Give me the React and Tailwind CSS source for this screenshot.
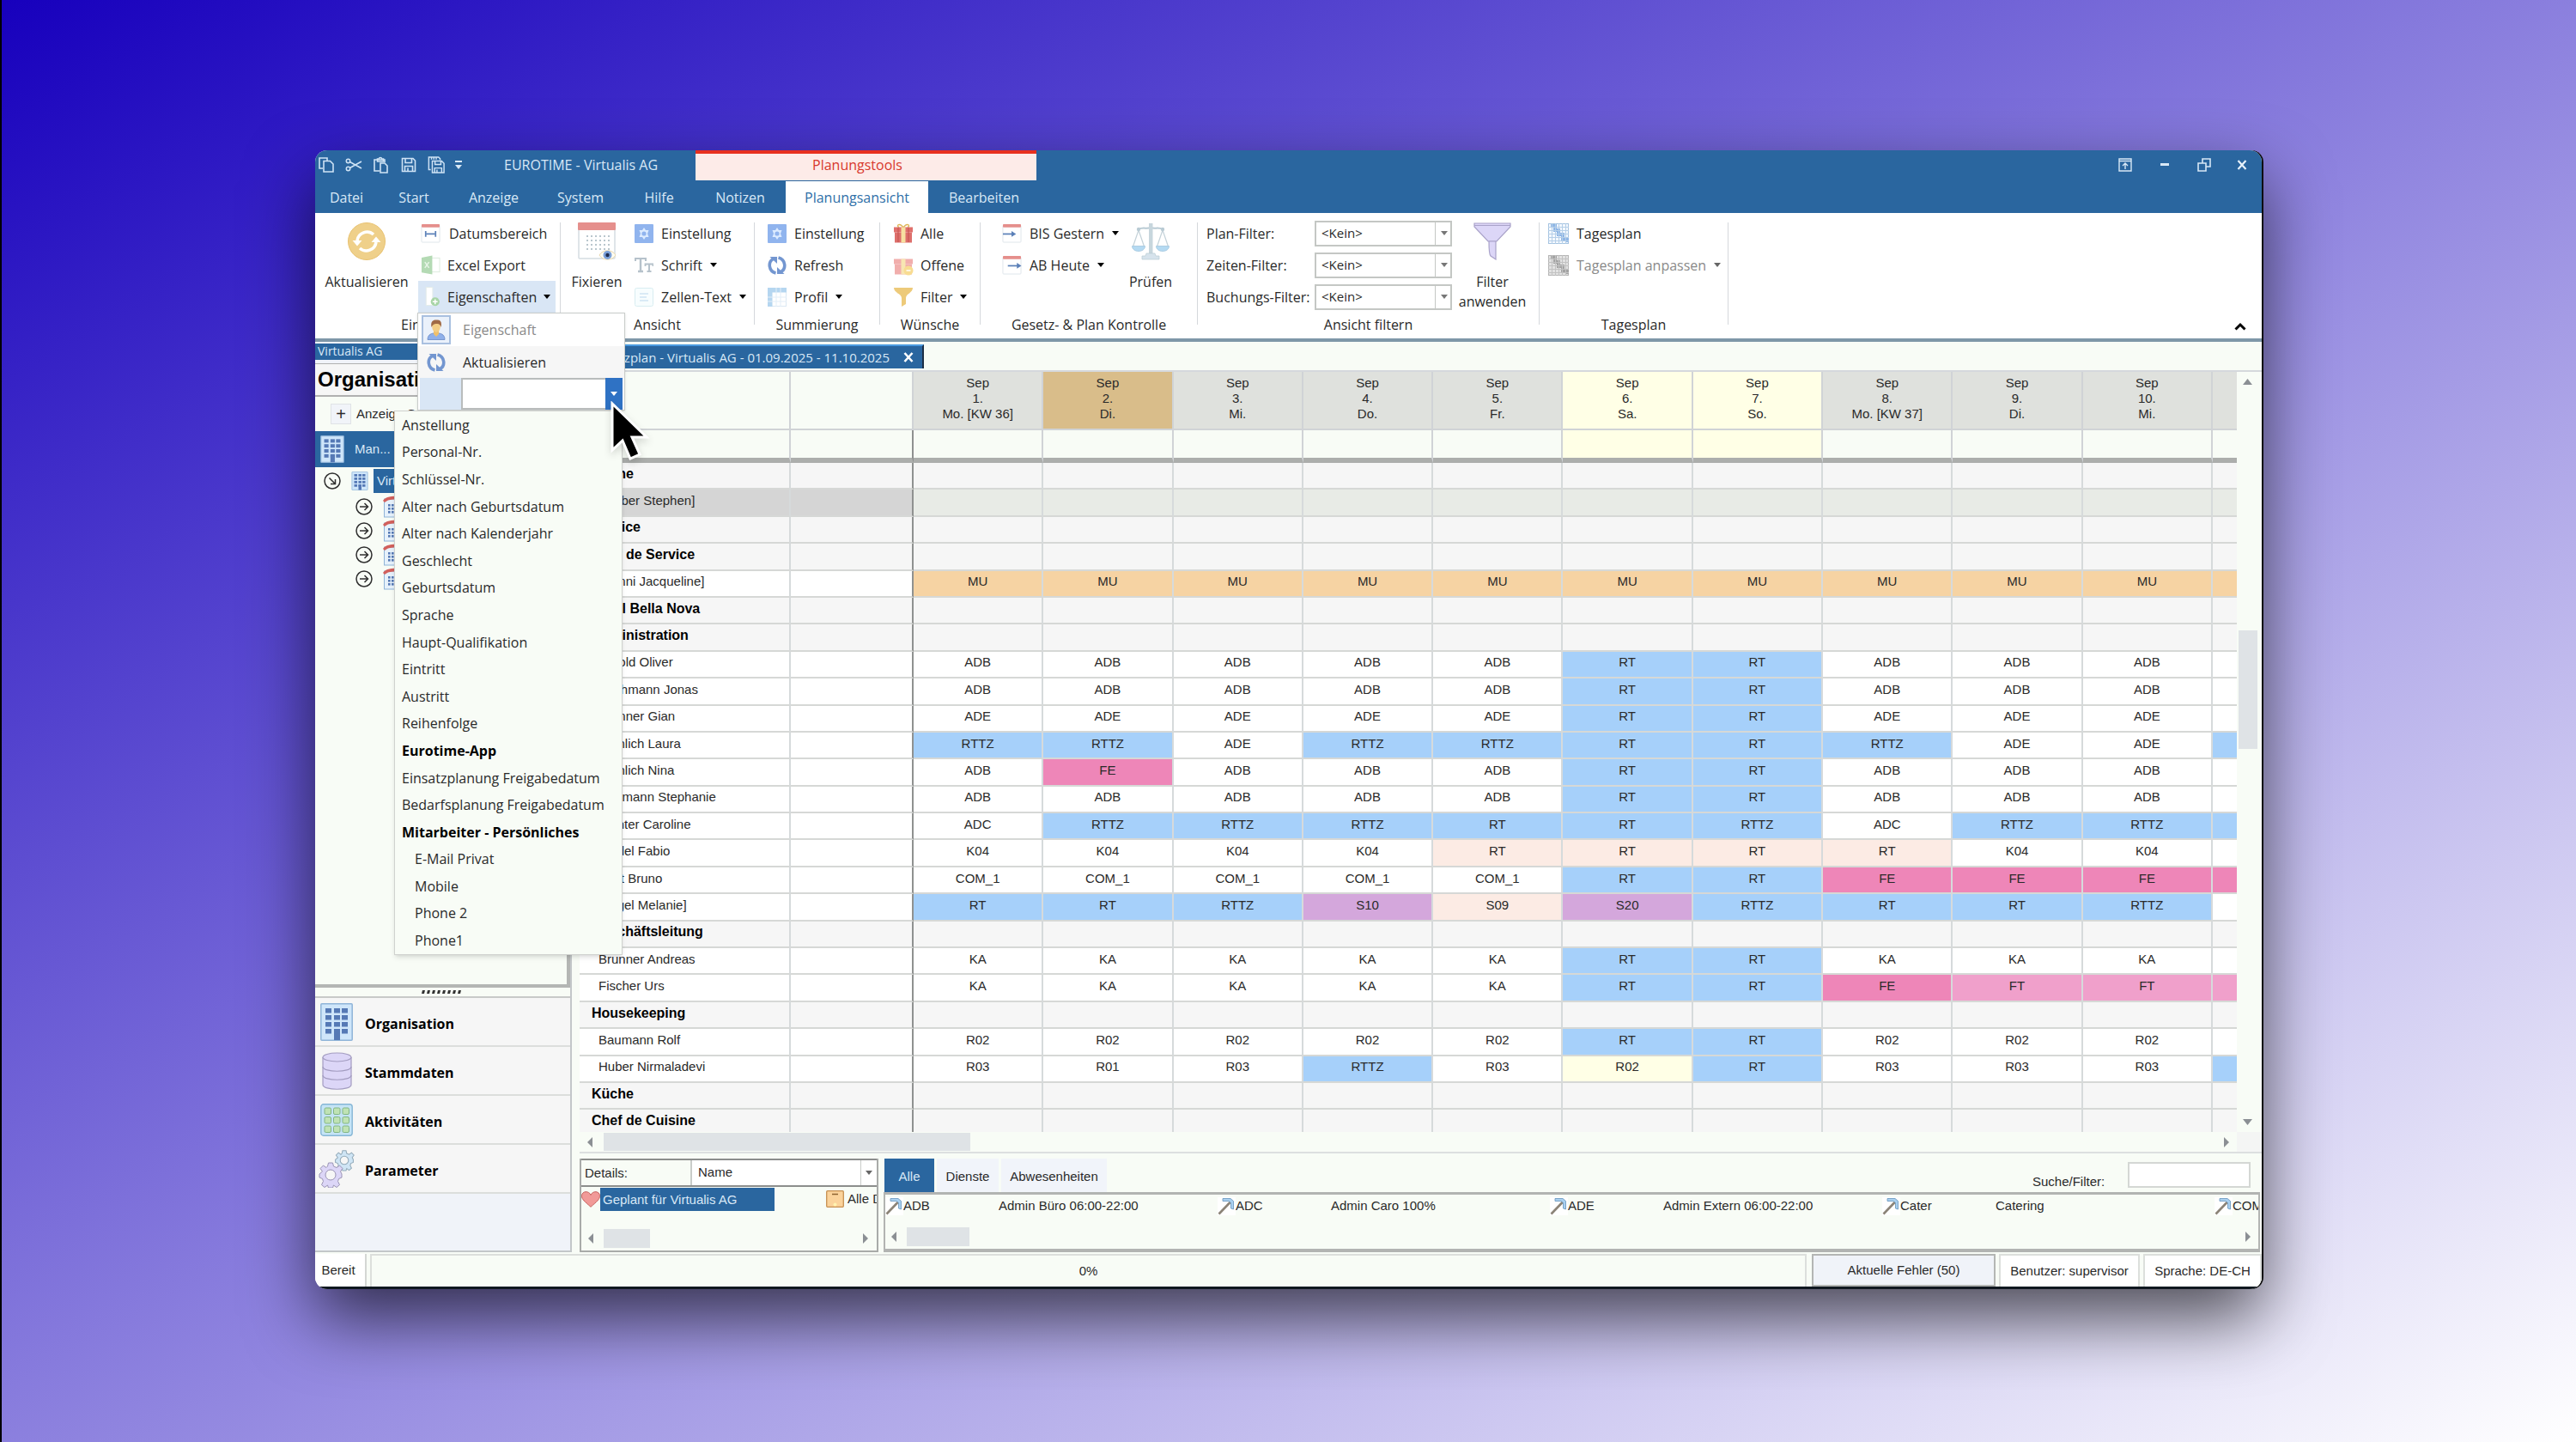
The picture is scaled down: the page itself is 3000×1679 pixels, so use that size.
import { useState } from 'react'
import clsx from 'clsx'

const DAYS = [
  { d: '1.', w: 'Mo. [KW 36]' },
  { d: '2.', w: 'Di.', today: true },
  { d: '3.', w: 'Mi.' },
  { d: '4.', w: 'Do.' },
  { d: '5.', w: 'Fr.' },
  { d: '6.', w: 'Sa.', weekend: true },
  { d: '7.', w: 'So.', weekend: true },
  { d: '8.', w: 'Mo. [KW 37]' },
  { d: '9.', w: 'Di.' },
  { d: '10.', w: 'Mi.' },
]

const COLORS = {
  RT: 'bg-[#a6d0fa]',
  RTTZ: 'bg-[#a6d0fa]',
  FE: 'bg-[#ee86b8]',
  FT: 'bg-[#f0a0cb]',
  MU: 'bg-[#f6d3a3]',
  S10: 'bg-[#d4a7dc]',
  S20: 'bg-[#d4a7dc]',
  S09: 'bg-[#fcebe4]',
}

// Eine Zeile ohne codes ist eine Gruppenzeile, next ist der angeschnittene 11. Tag
const ROWS = [
  { name: 'Küche' },
  { name: '[Weber Stephen]', selected: true },
  { name: 'Service' },
  { name: 'Chef de Service' },
  { name: '[Hänni Jacqueline]', codes: 'MU MU MU MU MU MU MU MU MU MU', next: 'MU' },
  { name: 'Hotel Bella Nova' },
  { name: 'Administration' },
  { name: 'Arnold Oliver', codes: 'ADB ADB ADB ADB ADB RT RT ADB ADB ADB' },
  { name: 'Bachmann Jonas', codes: 'ADB ADB ADB ADB ADB RT RT ADB ADB ADB' },
  { name: 'Brunner Gian', codes: 'ADE ADE ADE ADE ADE RT RT ADE ADE ADE' },
  { name: 'Fröhlich Laura', codes: 'RTTZ RTTZ ADE RTTZ RTTZ RT RT RTTZ ADE ADE', next: 'RT' },
  { name: 'Fröhlich Nina', codes: 'ADB FE ADB ADB ADB RT RT ADB ADB ADB' },
  { name: 'Neumann Stephanie', codes: 'ADB ADB ADB ADB ADB RT RT ADB ADB ADB' },
  { name: 'Richter Caroline', codes: 'ADC RTTZ RTTZ RTTZ RT RT RTTZ ADC RTTZ RTTZ', next: 'RT' },
  { name: 'Seidel Fabio', codes: 'K04 K04 K04 K04 RT RT RT RT K04 K04', pale: true },
  { name: 'Vogt Bruno', codes: 'COM_1 COM_1 COM_1 COM_1 COM_1 RT RT FE FE FE', next: 'FE' },
  { name: '[Vogel Melanie]', codes: 'RT RT RTTZ S10 S09 S20 RTTZ RT RT RTTZ' },
  { name: 'Geschäftsleitung' },
  { name: 'Brunner Andreas', codes: 'KA KA KA KA KA RT RT KA KA KA' },
  { name: 'Fischer Urs', codes: 'KA KA KA KA KA RT RT FE FT FT', next: 'FT' },
  { name: 'Housekeeping' },
  { name: 'Baumann Rolf', codes: 'R02 R02 R02 R02 R02 RT RT R02 R02 R02' },
  { name: 'Huber Nirmaladevi', codes: 'R03 R01 R03 RTTZ R03 R02 RT R03 R03 R03', next: 'RT' },
  { name: 'Küche' },
  { name: 'Chef de Cuisine' },
]

const OPTIONS = [
  { label: 'Anstellung' },
  { label: 'Personal-Nr.' },
  { label: 'Schlüssel-Nr.' },
  { label: 'Alter nach Geburtsdatum' },
  { label: 'Alter nach Kalenderjahr' },
  { label: 'Geschlecht' },
  { label: 'Geburtsdatum' },
  { label: 'Sprache' },
  { label: 'Haupt-Qualifikation' },
  { label: 'Eintritt' },
  { label: 'Austritt' },
  { label: 'Reihenfolge' },
  { label: 'Eurotime-App', bold: true },
  { label: 'Einsatzplanung Freigabedatum' },
  { label: 'Bedarfsplanung Freigabedatum' },
  { label: 'Mitarbeiter - Persönliches', bold: true },
  { label: 'E-Mail Privat', indent: true },
  { label: 'Mobile', indent: true },
  { label: 'Phone 2', indent: true },
  { label: 'Phone1', indent: true },
]

const SERVICES = [
  ['ADB', 'Admin Büro 06:00-22:00'],
  ['ADC', 'Admin Caro 100%'],
  ['ADE', 'Admin Extern 06:00-22:00'],
  ['Cater', 'Catering'],
  ['COM_1', ''],
]

/* ---------- Icons ---------- */

function Caret({ className = 'fill-black' }) {
  return (
    <svg viewBox="0 0 8 5" className={clsx('h-[5px] w-2 shrink-0', className)}>
      <path d="M0 0h8L4 5z" />
    </svg>
  )
}

function Arrow({ dir }) {
  const d = { left: 'M8 0v12L2 6z', right: 'M3 0v12l6-6z', up: 'M0 9h11L5.500 2z', down: 'M0 3h11l-5.500 7z' }[dir]
  return (
    <svg viewBox="0 0 11 12" className="h-3 w-[11px] shrink-0 fill-[#8b8f94]">
      <path d={d} />
    </svg>
  )
}

function CopyIcon() {
  return (
    <svg viewBox="0 0 20 20" className="size-5" fill="none" stroke="#cfe3f5" strokeWidth="1.600">
      <path d="M6 14H2V2h9v3" />
      <path d="M7 5.500h7.500L18 9v9H7z" />
    </svg>
  )
}

function CutIcon() {
  return (
    <svg viewBox="0 0 20 20" className="size-5" fill="none" stroke="#cfe3f5" strokeWidth="1.500">
      <circle cx="3.500" cy="5.500" r="2.200" />
      <circle cx="3.500" cy="14.500" r="2.200" />
      <path d="M5.500 6.500L19 14M5.500 13.500L19 6" />
    </svg>
  )
}

function PasteIcon() {
  return (
    <svg viewBox="0 0 20 20" className="size-5" fill="none" stroke="#cfe3f5" strokeWidth="1.600">
      <path d="M8 17H2V4h12v3" />
      <path d="M5.500 6V3h2c0-2 3-2 3 0h2v3z" />
      <path d="M9 8h5l3 3v8H9z" />
    </svg>
  )
}

function SaveIcon() {
  return (
    <svg viewBox="0 0 20 20" className="size-5" fill="none" stroke="#cfe3f5" strokeWidth="1.600">
      <path d="M2.500 2.500H15L17.500 5v12.500h-15zM6 2.500v5h7.500v-5M5.500 17.500v-6h9v6M9 13.500v4" />
    </svg>
  )
}

function SaveAllIcon() {
  return (
    <svg viewBox="0 0 22 24" className="h-[22px] w-5" fill="none" stroke="#cfe3f5" strokeWidth="1.600">
      <path d="M4 18H1.500V2H14l2 2v2M5 2v3M8 2v3M11 2v3" />
      <path d="M6 7h12l3 3v12H6zM9.500 7v4.500H17V7M9 22v-6h9v6M12 18v4" />
    </svg>
  )
}

function SyncBigIcon() {
  return (
    <svg viewBox="0 0 44 44" className="size-11">
      <circle cx="22" cy="22" r="21.500" fill="#efd08a" stroke="#e8c271" />
      <g fill="none" stroke="#fff" strokeWidth="3.600">
        <path d="M11 21a11.500 11.500 0 0 1 19-7" />
        <path d="M33 23a11.500 11.500 0 0 1-19 7" />
      </g>
      <path d="M5.500 21h11l-5.500 6.500zM27.500 23h11L33 16.500z" fill="#fff" />
    </svg>
  )
}

function CalendarIcon({ shape }) {
  return (
    <svg viewBox="0 0 24 24" className="size-[23px] shrink-0">
      <rect x="1" y="3" width="22" height="20" rx="1" fill="#fff" stroke="#dfe5ea" />
      <rect x="1" y="1" width="22" height="4" rx="1" fill="#e58f8c" />
      <g stroke="#5b80b8" fill="none" strokeWidth="1.800">
        {shape === 'range' && <path d="M6 9.500v7M18 9.500v7M7 13h10" />}
        {shape === 'until' && <path d="M1 13h13" />}
        {shape === 'from' && <path d="M7 13h13" />}
      </g>
      {shape === 'until' && <path d="M11.500 9.500l5.500 3.500-5.500 3.500z" fill="#5b80b8" />}
      {shape === 'from' && <path d="M18 9.500l5.500 3.500-5.500 3.500z" fill="#5b80b8" />}
    </svg>
  )
}

function ExcelIcon() {
  return (
    <svg viewBox="0 0 24 24" className="size-[23px] shrink-0">
      <rect x="12" y="3.500" width="11" height="17" fill="#fff" stroke="#dcebdd" />
      <path d="M1 3l13-2.500v23L1 21z" fill="#b4dab4" />
      <path d="M5 8.500l5 7M10 8.500l-5 7" stroke="#e8f5e8" strokeWidth="1.600" />
    </svg>
  )
}

function PropertyIcon() {
  return (
    <svg viewBox="0 0 24 24" className="size-[23px] shrink-0">
      <rect x="6.500" y=".5" width="8" height="22" fill="#fff" stroke="#e3ece9" />
      <circle cx="17.500" cy="18" r="5.300" fill="#a8d5a7" />
      <path d="M17.500 15v6M14.500 18h6" stroke="#fff" strokeWidth="1.600" />
    </svg>
  )
}

function FixIcon() {
  return (
    <svg viewBox="0 0 44 44" className="size-11">
      <rect x="1" y="2" width="42" height="40" rx="1" fill="#fff" stroke="#d5dde2" strokeWidth="1.500" />
      <rect x="0" y="0" width="44" height="9" rx="1" fill="#e58f8c" />
      <g fill="#b9c6cd">
        {[15, 20, 25, 30].map((y) =>
          [10, 15, 20, 25, 30, 35].map((x) => <rect key={x + '-' + y} x={x} y={y} width="2" height="2" />)
        )}
      </g>
      <path d="M25 38c4-7 15-7 19 0-4 7-15 7-19 0z" fill="#fffdf2" stroke="#ead9ae" />
      <circle cx="34.500" cy="38" r="5" fill="#7ba0d8" />
      <circle cx="34.500" cy="38" r="2.200" fill="#1f2c4d" />
    </svg>
  )
}

function SettingIcon() {
  return (
    <svg viewBox="0 0 22 22" className="size-[22px] shrink-0">
      <rect width="22" height="22" rx="1" fill="#90b4ee" />
      <path d="M11 4l2 3h3.500L15 11l1.500 4H13l-2 3-2-3H5.500L7 11 5.500 7H9z" fill="#dcebff" />
      <circle cx="11" cy="11" r="2.600" fill="#90b4ee" />
    </svg>
  )
}

function FontIcon() {
  return (
    <svg viewBox="0 0 22 22" className="size-[22px] shrink-0" fill="none" stroke="#b6c2cb">
      <path d="M1 6V3h12v3" strokeWidth="2" />
      <path d="M7 3v15M4 18h6" strokeWidth="2.400" />
      <path d="M12.500 12V9.500h9V12" strokeWidth="1.800" />
      <path d="M17 9.500V18M14.500 18h5" strokeWidth="2" />
    </svg>
  )
}

function CellTextIcon() {
  return (
    <svg viewBox="0 0 22 22" className="size-[22px] shrink-0">
      <rect x=".5" y=".5" width="21" height="21" rx="2" fill="#f7fdfe" stroke="#d8edf1" />
      <path d="M6 7h10M6 11h8M6 15h10" stroke="#bcd8ee" strokeWidth="1.200" />
    </svg>
  )
}

function RefreshIcon() {
  return (
    <svg viewBox="0 0 22 22" className="size-[22px] shrink-0">
      <g fill="none" stroke="#7396d0" strokeWidth="3.600">
        <path d="M9.500 20C1 18 0 7 6.500 3.500" />
        <path d="M12.500 2c8.500 2 9.500 13 3 16.500" />
      </g>
      <path d="M2.500 1h8.500v8zM19.500 21H11v-8z" fill="#7396d0" />
    </svg>
  )
}

function ProfileIcon() {
  return (
    <svg viewBox="0 0 22 22" className="size-[22px] shrink-0">
      <rect x=".5" y=".5" width="21" height="21" fill="#fff" stroke="#dbe8f3" />
      <path d="M0 0h22v5.500H5.500V22H0z" fill="#b5d6f0" />
      <path d="M10 5.500V22M15 5.500V22M5 11h17M5 16h17M10 0v5M15 0v5M0 11h5M0 16h5" stroke="#e3eef7" />
    </svg>
  )
}

function GiftIcon({ open }) {
  return (
    <svg viewBox="0 0 24 24" className="size-6 shrink-0">
      <g opacity={open ? 0.8 : 1}>
        {!open && <path d="M12 5C8-1 3 2 7 5M12 5c4-6 9-3 5 0" fill="none" stroke="#dfb85b" strokeWidth="1.500" />}
        <rect x="1" y="4.500" width="22" height="6" fill={open ? '#ee9a98' : '#e0706c'} />
        <rect x="2" y="10.500" width="20" height="12" fill={open ? '#ee9a98' : '#dd6f6b'} />
        {!open && <path d="M6 5v17M18 5v17" stroke="#c4524f" />}
        <rect x="9.500" y="4.500" width="5" height="18" fill="#f7e0a0" />
      </g>
      {open && (
        <g>
          <circle cx="18" cy="18" r="5.500" fill="#f8dc92" />
          <path d="M15.500 18h5" stroke="#fff" strokeWidth="1.500" />
        </g>
      )}
    </svg>
  )
}

function FunnelIcon() {
  return (
    <svg viewBox="0 0 24 24" className="size-6 shrink-0">
      <path d="M1 1h22c0 6-8 7-8 12v7l-5 3V13C10 8 1 7 1 1z" fill="#edca7a" />
    </svg>
  )
}

function ScaleIcon() {
  return (
    <svg viewBox="0 0 44 44" className="size-11">
      <path d="M8 8c5-3 9 0 14-2 5 2 9-1 14 2" fill="none" stroke="#b9cbd4" strokeWidth="2" />
      <rect x="20" y="1" width="4.500" height="35" fill="#c7d6dd" />
      <path d="M17 36h10l1 3h4v4H12v-4h4z" fill="#d6e3ec" stroke="#b9cbd4" strokeWidth=".7" />
      <path d="M8 9L1.500 28M8 9l6.500 19M36 9l-6.500 19M36 9l6.500 19" stroke="#c4d2d9" strokeWidth="1.200" />
      <path d="M.5 27.500h15c0 8-15 8-15 0zM28.500 27.500h15c0 8-15 8-15 0z" fill="#b5daf2" stroke="#a3c6dd" strokeWidth=".8" />
      <circle cx="8" cy="8" r="2.200" fill="#b9cbd4" />
      <circle cx="36" cy="8" r="2.200" fill="#b9cbd4" />
    </svg>
  )
}

function FilterBigIcon() {
  return (
    <svg viewBox="0 0 44 44" className="size-11" fill="#dcd6f7" stroke="#a9a2c9" strokeWidth="1.200">
      <path d="M1 1h42v4L27 22H17L1 5z" />
      <path d="M18 22h8v21l-6-4c-2-2-2-9-2-17z" />
      <path d="M1 3.500h42" />
    </svg>
  )
}

function DayPlanIcon({ gray }) {
  return (
    <svg viewBox="0 0 24 24" className="size-6 shrink-0">
      <rect x=".5" y=".5" width="23" height="23" fill={gray ? '#e2e2e2' : '#f4f9ff'} stroke={gray ? '#b5b5b5' : '#a5c3e0'} />
      <path d="M3 3h5v5h4v5h5v5h5v4" fill="none" stroke={gray ? '#a3a3a3' : '#8fb6e6'} strokeWidth="4" />
      <path d="M4.500 0v24M8.500 0v24M12.500 0v24M16.500 0v24M20.500 0v24M0 4.500h24M0 8.500h24M0 12.500h24M0 16.500h24M0 20.500h24" stroke={gray ? '#c2c2c2' : '#b5cfe8'} />
    </svg>
  )
}

function UserIcon() {
  return (
    <svg viewBox="0 0 24 24" className="size-6">
      <path d="M2 23.500c0-5 3-7 7-7.500h6c4 .5 7 2.500 7 7.500z" fill="#8fb0ea" stroke="#5f7fc0" strokeWidth=".7" />
      <path d="M9 13h6v4l-3 3-3-3z" fill="#efc06c" />
      <ellipse cx="12" cy="8.500" rx="4.800" ry="6.200" fill="#f4ce85" />
      <path d="M6.500 9C5 2 9 0 12.500.5 17 0 19 3 17.500 9c-1-3-2-4-4-4-3 0-5 0-7 4z" fill="#a06a45" />
    </svg>
  )
}

function BuildingIcon({ className }) {
  return (
    <svg viewBox="0 0 38 44" className={clsx('shrink-0', className)}>
      <rect x=".8" y=".8" width="36.400" height="42.400" rx="1" fill="#cfe6fa" stroke="#8fb4d8" strokeWidth="1.500" />
      <g fill="#5579b5">
        {[6, 14, 22, 30].map((y) => [6, 16, 25].map((x) => <rect key={x + '-' + y} x={x} y={y} width="7" height="5.500" />))}
        <rect x="16" y="31" width="7" height="12" />
      </g>
    </svg>
  )
}

function HouseIcon() {
  return (
    <svg viewBox="0 0 26 26" className="size-[26px] shrink-0">
      <rect x="1.500" y="4" width="23" height="21" fill="#e6f1fb" stroke="#8fb4d8" />
      <path d="M0 6c3-5 9-6 26-5v4C12 4 6 4 2 8z" fill="#d2605c" />
      <g fill="#5579b5">
        {[10, 14, 18].map((y) => [6, 10, 14, 18].map((x) => <rect key={x + '-' + y} x={x} y={y} width="2.600" height="2.600" />))}
      </g>
    </svg>
  )
}

function CircleArrow({ down }) {
  return (
    <svg viewBox="0 0 20 20" className="size-5 shrink-0" fill="none" stroke="#2f2f2f" strokeWidth="1.500">
      <circle cx="10" cy="10" r="9" />
      {down ? <path d="M6.500 6.500l6.500 6.500M13.500 8v5.500H8" /> : <path d="M5 10h9M10.500 6L14.500 10l-4 4" />}
    </svg>
  )
}

function DatabaseIcon() {
  return (
    <svg viewBox="0 0 38 44" className="h-11 w-[38px]" fill="#dcd6f7" stroke="#a39cc0" strokeWidth="1.200">
      <path d="M3 6v32c0 7 33 7 33 0V6" />
      <ellipse cx="19.500" cy="6" rx="16.500" ry="5" />
      <path d="M3 17c0 7 33 7 33 0M3 27c0 7 33 7 33 0" fill="none" />
    </svg>
  )
}

function ActivityIcon() {
  return (
    <svg viewBox="0 0 38 38" className="size-[38px]">
      <rect x=".8" y=".8" width="36.400" height="36.400" rx="3" fill="#c5e4f6" stroke="#86b6d6" strokeWidth="1.400" />
      <g fill="#bfe3b4" stroke="#82b583">
        {[5, 15.5, 26].map((y) => [5, 15.5, 26].map((x) => <rect key={x + '-' + y} x={x} y={y} width="7.500" height="7.500" rx="1.500" />))}
      </g>
    </svg>
  )
}

const GEAR = 'M-2.500-14h5l1 4 3.500 1.500 3.500-2.500 3.500 3.500-2.500 3.500L13-1v4l-3.500 1.500-1 3 2 4-3.500 3-3.500-2.500-1 3h-5l-1-3-3.500 2.500-3.500-3 2-4-1-3L-13 3v-4l3.500-3L-12-7.500l3.500-3.500L-5-8.500-3.500-10z'

function GearsIcon() {
  return (
    <svg viewBox="0 0 42 44" className="h-11 w-[42px]">
      <g transform="translate(30 12) scale(.8)" fill="#cfe5f5" stroke="#94abba" strokeWidth="1.300">
        <path d={GEAR} />
        <circle r="6" fill="#f6f6f6" />
      </g>
      <g transform="translate(14 29)" fill="#dcd6f7" stroke="#9a94b5">
        <path d={GEAR} />
        <circle r="6" fill="#f6f6f6" />
      </g>
    </svg>
  )
}

function PickIcon() {
  return (
    <svg viewBox="0 0 21 21" className="size-[21px] shrink-0 bg-white">
      <path d="M1.500 19.500L15 5.500" stroke="#8b8377" strokeWidth="2.600" />
      <path d="M6 1.500h9l3.500 3V14l-3-1V6.500L13 4.500H6z" fill="#a9d0f0" stroke="#6f9cc2" strokeWidth=".9" />
    </svg>
  )
}

function HeartIcon() {
  return (
    <svg viewBox="0 0 22 19" className="h-[19px] w-[22px] shrink-0">
      <path d="M11 18.300C4 12 .5 9.500.5 5.500.5-.5 9-1 11 4.500 13-1 21.500-.5 21.500 5.500c0 4-3.500 6.500-10.500 12.800z" fill="#f19a98" stroke="#c76461" />
    </svg>
  )
}

function FolderIcon() {
  return (
    <svg viewBox="0 0 21 20" className="h-5 w-[21px] shrink-0">
      <rect x=".7" y=".7" width="19.600" height="18.600" rx="1" fill="#fbd39b" stroke="#c79052" strokeWidth="1.300" />
      <path d="M7 4.500h7" stroke="#8e6330" strokeWidth="1.500" />
      <circle cx="10.500" cy="16.500" r="2" fill="#fff3b0" />
    </svg>
  )
}

function Cursor() {
  return (
    <svg viewBox="0 0 46 72" className="h-[72px] w-[46px] drop-shadow-lg">
      <path d="M2 3v54l12-11 9 21 11-5-9-20h17z" fill="#000" stroke="#fff" strokeWidth="3" />
    </svg>
  )
}

/* ---------- Ribbon ---------- */

function BigButton({ icon, children, className }) {
  return (
    <button type="button" className={clsx('flex flex-col items-center gap-[14px] pt-[6px] text-center leading-[23px]', className)}>
      {icon}
      <span>{children}</span>
    </button>
  )
}

function SmallButton({ icon, children, menu, active, disabled, className }) {
  return (
    <button
      type="button"
      disabled={disabled}
      className={clsx('flex h-[37px] items-center whitespace-nowrap', active && 'bg-[#d9e6f5]', disabled && 'text-[#8a8a8a]', className)}
    >
      {icon}
      <span>{children}</span>
      {menu && <Caret className={disabled ? 'fill-[#666]' : 'fill-black'} />}
    </button>
  )
}

function Group({ title, className, children }) {
  return (
    <section className={clsx('relative flex shrink-0 flex-col pt-[5px]', className)}>
      <div className="flex h-[114px]">{children}</div>
      <h2 className="text-center leading-[22px]">{title}</h2>
    </section>
  )
}

function Divider() {
  return <div className="my-[11px] w-px shrink-0 bg-[#d5d8dc]" />
}

function FilterSelect({ id, label }) {
  return (
    <div className="flex h-[37px] items-center">
      <label htmlFor={id} className="w-[126px] whitespace-nowrap">{label}</label>
      <div className="relative">
        <select id={id} className="h-[30px] w-40 appearance-none border-2 border-[#c4c7c4] bg-white pb-px pl-[6px] text-[15px] outline-none">
          <option>&lt;Kein&gt;</option>
        </select>
        <span className="pointer-events-none absolute inset-y-0 right-0 flex w-5 items-center justify-center border-l border-[#c4c7c4]">
          <Caret className="fill-[#777]" />
        </span>
      </div>
    </div>
  )
}

function PropertyMenu() {
  const [value, setValue] = useState('')
  return (
    <div className="absolute left-[119px] top-[116px] z-20 w-[242px] border border-[#c9ccca] bg-white shadow-sm">
      <button type="button" className="flex h-[38px] w-full items-center gap-[14px] pl-1 text-[#8a8a8a]">
        <span className="flex size-[34px] items-center justify-center border-2 border-[#a9c0e0] bg-[#eaf1fb]"><UserIcon /></span>
        Eigenschaft
      </button>
      <button type="button" className="flex h-[37px] w-full items-center gap-5 bg-[#f6f6f6] pl-[10px]">
        <RefreshIcon />
        Aktualisieren
      </button>
      <div className="flex h-[37px] pl-[2px] pr-[2px]">
        <span className="w-12 bg-[#d9e6f5]" />
        <input
          aria-label="Eigenschaft wählen"
          value={value}
          onChange={(e) => setValue(e.target.value)}
          className="min-w-0 flex-1 border-2 border-r-0 border-[#b9bcbc] bg-white outline-none"
        />
        <button type="button" aria-label="Liste öffnen" className="flex w-5 items-center justify-center bg-[#2f72c4]">
          <Caret className="fill-white" />
        </button>
      </div>
      <ul className="absolute -left-[28px] top-[113px] flex h-[634px] w-[266px] flex-col border border-[#d0d2cf] bg-[#f8fcf6] pl-2 shadow-md">
        {OPTIONS.map((o) => (
          <li key={o.label} className={clsx('flex flex-1 items-center whitespace-nowrap', o.bold && 'font-bold text-black', o.indent && 'pl-[15px]')}>
            {o.label}
          </li>
        ))}
      </ul>
      <div className="pointer-events-none absolute left-[224px] top-[102px]"><Cursor /></div>
    </div>
  )
}

function Ribbon() {
  return (
    <div className="flex border-b-4 border-[#7e97a8] bg-white pb-[5px] text-[#2a2a2a]">
      <Group title="Einsatzplan" className="w-[285px]">
        <BigButton icon={<SyncBigIcon />} className="w-[120px]">Aktualisieren</BigButton>
        <div className="flex w-40 flex-col">
          <SmallButton icon={<CalendarIcon shape="range" />} className="gap-[10px] pl-[3px]">Datumsbereich</SmallButton>
          <SmallButton icon={<ExcelIcon />} className="gap-2 pl-[3px]">Excel Export</SmallButton>
          <SmallButton icon={<PropertyIcon />} className="gap-2 pl-[3px]" menu active>Eigenschaften</SmallButton>
        </div>
        <PropertyMenu />
      </Group>
      <Divider />
      <Group title="Ansicht" className="w-[225px]">
        <BigButton icon={<FixIcon />} className="w-[84px]">Fixieren</BigButton>
        <div className="flex flex-col">
          <SmallButton icon={<SettingIcon />} className="gap-[9px] pl-[2px]">Einstellung</SmallButton>
          <SmallButton icon={<FontIcon />} className="gap-[9px] pl-[2px]" menu>Schrift</SmallButton>
          <SmallButton icon={<CellTextIcon />} className="gap-[9px] pl-[2px]" menu>Zellen-Text</SmallButton>
        </div>
      </Group>
      <Divider />
      <Group title="Summierung" className="w-[145px]">
        <div className="flex flex-col">
          <SmallButton icon={<SettingIcon />} className="gap-[9px] pl-[15px]">Einstellung</SmallButton>
          <SmallButton icon={<RefreshIcon />} className="gap-[9px] pl-[15px]">Refresh</SmallButton>
          <SmallButton icon={<ProfileIcon />} className="gap-[9px] pl-[15px]" menu>Profil</SmallButton>
        </div>
      </Group>
      <Divider />
      <Group title="Wünsche" className="w-[116px]">
        <div className="flex flex-col">
          <SmallButton icon={<GiftIcon />} className="gap-2 pl-[15px]">Alle</SmallButton>
          <SmallButton icon={<GiftIcon open />} className="gap-2 pl-[15px]">Offene</SmallButton>
          <SmallButton icon={<FunnelIcon />} className="gap-2 pl-[15px]" menu>Filter</SmallButton>
        </div>
      </Group>
      <Divider />
      <Group title="Gesetz- & Plan Kontrolle" className="w-[252px]">
        <div className="flex w-[170px] flex-col">
          <SmallButton icon={<CalendarIcon shape="until" />} className="gap-[9px] pl-[25px]" menu>BIS Gestern</SmallButton>
          <SmallButton icon={<CalendarIcon shape="from" />} className="gap-[9px] pl-[25px]" menu>AB Heute</SmallButton>
        </div>
        <BigButton icon={<ScaleIcon />} className="w-14">Prüfen</BigButton>
      </Group>
      <Divider />
      <Group title="Ansicht filtern" className="w-[397px]">
        <div className="flex flex-col pl-[10px]">
          <FilterSelect id="plan" label="Plan-Filter:" />
          <FilterSelect id="zeiten" label="Zeiten-Filter:" />
          <FilterSelect id="buchung" label="Buchungs-Filter:" />
        </div>
        <BigButton icon={<FilterBigIcon />} className="w-[94px]">Filter anwenden</BigButton>
      </Group>
      <Divider />
      <Group title="Tagesplan" className="w-[219px]">
        <div className="flex flex-col">
          <SmallButton icon={<DayPlanIcon />} className="gap-[9px] pl-[10px]">Tagesplan</SmallButton>
          <SmallButton icon={<DayPlanIcon gray />} className="gap-[9px] pl-[10px]" menu disabled>Tagesplan anpassen</SmallButton>
        </div>
      </Group>
      <Divider />
      <button type="button" aria-label="Menüband reduzieren" className="ml-auto self-end px-[18px] pb-1">
        <svg viewBox="0 0 14 10" className="h-[10px] w-[14px]" fill="none" stroke="#000" strokeWidth="3">
          <path d="M1.500 8.500L7 3l5.500 5.500" />
        </svg>
      </button>
    </div>
  )
}

/* ---------- Kopf ---------- */

function TitleBar() {
  return (
    <header className="bg-[#2a669f] text-[#d8e8f6]">
      <div className="flex h-[35px] items-center">
        <div className="flex w-[220px] shrink-0 items-center gap-3 pb-[2px] pl-[3px]">
          <button type="button" aria-label="Kopieren"><CopyIcon /></button>
          <button type="button" aria-label="Ausschneiden"><CutIcon /></button>
          <button type="button" aria-label="Einfügen"><PasteIcon /></button>
          <button type="button" aria-label="Speichern"><SaveIcon /></button>
          <button type="button" aria-label="Alle speichern"><SaveAllIcon /></button>
          <button type="button" aria-label="Anpassen" className="flex flex-col items-center gap-[3px]">
            <span className="h-[2px] w-2 bg-[#d8e8f6]" />
            <Caret className="fill-[#d8e8f6]" />
          </button>
        </div>
        <h1 className="w-[223px] shrink-0 pb-[2px]">EUROTIME - Virtualis AG</h1>
        <div className="flex h-full w-[397px] shrink-0 items-center justify-center border-t-4 border-[#e8301f] bg-[#fdebe8] pb-[6px] pr-5 text-[#d8382c]">
          Planungstools
        </div>
        <div className="ml-auto flex items-center gap-[30px] pb-[2px] pr-[17px]">
          <button type="button" aria-label="Menübandoptionen">
            <svg viewBox="0 0 16 16" className="size-4" fill="none" stroke="#d8e8f6" strokeWidth="1.400">
              <path d="M1 1h14v14H1zM1 3.500h14M8 13V6.500M5 9l3-3 3 3" />
            </svg>
          </button>
          <button type="button" aria-label="Minimieren" className="w-4"><span className="mx-auto block h-[3px] w-[10px] bg-[#d8e8f6]" /></button>
          <button type="button" aria-label="Wiederherstellen">
            <svg viewBox="0 0 16 16" className="size-4" fill="none" stroke="#d8e8f6" strokeWidth="1.600">
              <path d="M1 6h9v9H1zM6 6V1h9v9h-5" />
            </svg>
          </button>
          <button type="button" aria-label="Schliessen">
            <svg viewBox="0 0 12 12" className="size-3" stroke="#e6f1fa" strokeWidth="2.200">
              <path d="M1.500 1l9 10M10.500 1l-9 10" />
            </svg>
          </button>
        </div>
      </div>
      <nav className="flex h-[38px] items-stretch pt-px">
        <button type="button" className="w-[73px]">Datei</button>
        <button type="button" className="w-[84px]">Start</button>
        <button type="button" className="w-[102px]">Anzeige</button>
        <button type="button" className="w-[100px]">System</button>
        <button type="button" className="w-[83px]">Hilfe</button>
        <button type="button" className="w-[106px]">Notizen</button>
        <button type="button" className="w-[166px] bg-white text-[#2f6fa8]">Planungsansicht</button>
        <button type="button" className="w-[130px]">Bearbeiten</button>
      </nav>
    </header>
  )
}

/* ---------- Linke Seite ---------- */

function NavItem({ icon, children }) {
  return (
    <button type="button" className="flex h-[57px] w-full items-center gap-3 border-b-2 border-[#dcdedc] bg-[#f6f6f6] pl-1 text-black">
      <span className="flex w-[42px] items-center justify-center">{icon}</span>
      <span className="pt-1 font-bold">{children}</span>
    </button>
  )
}

function Sidebar() {
  return (
    <aside className="flex w-[299px] shrink-0 flex-col border-r-2 border-[#c3c7c9] bg-[#f0f3f9]">
      <div className="mt-[2px] h-[19px] bg-[#2a669f] pl-[3px] text-sm/[17px] text-[#d8e8f6]">Virtualis AG</div>
      <h2 className="mt-1 border-b-2 border-t border-[#b0b0b0] bg-[#f6f6f6] pl-[3px] font-['Liberation_Sans',sans-serif] text-2xl/9 font-bold text-black">
        Organisation
      </h2>
      <div className="flex flex-1 flex-col border-b-4 border-r-4 border-[#b4b6b4] bg-[#f8fcf6] font-['Liberation_Sans',sans-serif] text-[15px]">
        <button type="button" className="flex h-10 items-center gap-[6px] pl-[18px]">
          <span className="flex size-6 items-center justify-center border border-[#e0e3e6] bg-[#f1f4f9] text-xl/5">+</span>
          Anzeige Optionen
        </button>
        <div className="flex h-[42px] items-center gap-3 bg-[#2a669f] pl-[6px] text-[#d8e8f6]">
          <BuildingIcon className="h-8 w-7" />
          Man...
        </div>
        <div className="flex h-8 items-center pl-[10px]">
          <CircleArrow down />
          <BuildingIcon className="ml-3 h-[22px] w-5" />
          <span className="ml-[6px] bg-[#2a669f] px-1 py-1 leading-5 text-[#d8e8f6]">Virtualis AG</span>
        </div>
        {['Hotel Bella Nova', 'Hotel Bellevue', 'Restaurant', 'Wellness'].map((h) => (
          <button key={h} type="button" aria-label={h} className="flex h-7 items-center gap-3 pl-[47px]">
            <CircleArrow />
            <HouseIcon />
          </button>
        ))}
      </div>
      <div className="flex h-3 items-center justify-center border-b-2 border-[#c8cac8] bg-[#f8fcf6]">
        <svg viewBox="0 0 50 4" className="h-1 w-[50px] fill-[#333]">
          {[0, 6, 12, 18, 24, 30, 36, 42].map((x) => <path key={x} d={`M${x + 1} 0h3l-1 4h-3z`} />)}
        </svg>
      </div>
      <nav>
        <NavItem icon={<BuildingIcon className="h-11 w-[38px]" />}>Organisation</NavItem>
        <NavItem icon={<DatabaseIcon />}>Stammdaten</NavItem>
        <NavItem icon={<ActivityIcon />}>Aktivitäten</NavItem>
        <NavItem icon={<GearsIcon />}>Parameter</NavItem>
      </nav>
      <div className="h-[68px] border-b-2 border-[#c3c7c9]" />
    </aside>
  )
}

/* ---------- Einsatzplan ---------- */

function PlanRow({ row }) {
  const codes = row.codes ? row.codes.split(' ') : []
  const group = !row.codes
  const base = row.selected ? 'bg-[#e8ebe6]' : group ? 'bg-[#f6f6f6]' : 'bg-white'
  const cell = 'border-b-2 border-r-2 border-b-[#d6d8d6] border-r-[#d6dadb] p-0 pb-1'

  const color = (code, i) => {
    if (row.pale && code === 'RT') return 'bg-[#fcebe4]'
    if (DAYS[i].weekend && code === 'R02') return 'bg-[#ffffe6]'
    return COLORS[code] || base
  }

  return (
    <tr>
      <th
        scope="row"
        className={clsx(
          cell, 'whitespace-nowrap text-left',
          group && !row.selected ? 'pl-[14px] text-base/[18px] font-bold text-black' : 'pl-[22px] font-normal',
          row.selected ? 'bg-[#d5d5d5]' : base
        )}
      >
        {row.name}
      </th>
      <td className={clsx('border-b-2 border-r-2 border-b-[#d6d8d6] border-r-[#8f9190]', row.selected ? 'bg-[#d5d5d5]' : base)} />
      {DAYS.map((d, i) => (
        <td key={d.d} className={clsx(cell, 'text-center', color(codes[i], i))}>{codes[i]}</td>
      ))}
      <td className={clsx('border-b-2 border-[#d6d8d6]', COLORS[row.next] || base)} />
    </tr>
  )
}

function PlanTable() {
  return (
    <div className="flex border-t-2 border-[#d5d8dc]">
      <div className="h-[885px] flex-1 overflow-hidden">
        <table className="h-[891px] w-full table-fixed border-separate border-spacing-0 leading-[18px]">
          <colgroup>
            <col className="w-[246px]" />
            <col className="w-[143px]" />
            {DAYS.map((d) => <col key={d.d} />)}
            <col className="w-[28px]" />
          </colgroup>
          <thead>
            <tr className="h-[68px]">
              <td className="border-b-2 border-r-2 border-[#d0d3d6]" />
              <td className="border-b-2 border-r-2 border-[#d0d3d6]" />
              {DAYS.map((d) => (
                <th
                  key={d.d}
                  scope="col"
                  className={clsx(
                    'border-b-2 border-r-2 border-[#d0d3d6] p-0 pb-1 font-normal',
                    d.today ? 'bg-[#d9bd8a]' : d.weekend ? 'bg-[#ffffe6]' : 'bg-[#dfe1dd]'
                  )}
                >
                  Sep<br />{d.d}<br />{d.w}
                </th>
              ))}
              <td className="border-b-2 border-[#d0d3d6] bg-[#dfe1dd]" />
            </tr>
            <tr className="h-[38px]">
              <td className="border-b-[6px] border-r-2 border-b-[#acaeac] border-r-[#d0d3d6]" />
              <td className="border-b-[6px] border-r-2 border-b-[#acaeac] border-r-[#8f9190]" />
              {DAYS.map((d) => (
                <td key={d.d} className={clsx('border-b-[6px] border-r-2 border-b-[#acaeac] border-r-[#d0d3d6]', d.weekend && 'bg-[#ffffe6]')} />
              ))}
              <td className="border-b-[6px] border-[#acaeac]" />
            </tr>
          </thead>
          <tbody>
            {ROWS.map((row, i) => <PlanRow key={i} row={row} />)}
          </tbody>
        </table>
      </div>
      <div className="flex w-[29px] flex-col items-center py-[6px] pr-1">
        <Arrow dir="up" />
        <div className="mt-[283px] h-[138px] w-[22px] bg-[#dfe3e6]" />
        <div className="mt-auto"><Arrow dir="down" /></div>
      </div>
    </div>
  )
}

function DetailPanel() {
  return (
    <section className="flex w-[348px] shrink-0 flex-col border-b-2 border-l-2 border-r-2 border-[#a9aba9]">
      <div className="flex h-[33px] items-stretch border-2 border-l-0 border-r-0 border-[#8c8e8c]">
        <label htmlFor="details" className="w-[127px] pl-1 pt-1">Details:</label>
        <div className="relative flex-1 border-l-2 border-[#c9ccc9] bg-white">
          <select id="details" className="h-full w-full appearance-none bg-white pl-[7px] outline-none">
            <option>Name</option>
          </select>
          <span className="pointer-events-none absolute inset-y-0 right-0 flex w-[19px] items-center justify-center border-l border-[#c9ccc9]">
            <Caret className="fill-[#666]" />
          </span>
        </div>
      </div>
      <div className="flex h-7 items-center overflow-hidden whitespace-nowrap">
        <HeartIcon />
        <span className="w-[203px] shrink-0 bg-[#2a669f] pl-[3px] leading-[27px] text-[#d8e8f6]">Geplant für Virtualis AG</span>
        <span className="ml-[60px] flex items-center gap-1"><FolderIcon />Alle Dienste</span>
      </div>
      <div className="mt-auto flex h-7 items-center pl-[6px] pr-2">
        <Arrow dir="left" />
        <div className="ml-[9px] h-[22px] w-[54px] bg-[#dfe3e6]" />
        <div className="ml-auto"><Arrow dir="right" /></div>
      </div>
    </section>
  )
}

function ServicePanel() {
  return (
    <section className="flex min-w-0 flex-1 flex-col pr-[2px]">
      <div className="flex h-[39px] items-stretch gap-[3px]">
        <button type="button" className="ml-px w-[58px] bg-[#2a669f] pt-1 text-[#d8e8f6]">Alle</button>
        <button type="button" className="w-[72px] bg-[#f1f4fa] pt-1">Dienste</button>
        <button type="button" className="w-[123px] bg-[#f1f4fa] pt-1">Abwesenheiten</button>
        <div className="ml-auto flex items-start pr-[11px] pt-1">
          <label htmlFor="suche" className="w-[111px] pt-3">Suche/Filter:</label>
          <input id="suche" className="h-[30px] w-[143px] border-2 border-[#d4d7d4] bg-white outline-none" />
        </div>
      </div>
      <div className="flex flex-1 flex-col border-2 border-b-4 border-t-[3px] border-[#b2b4b2]">
        <ul className="flex overflow-hidden pt-[2px]">
          {SERVICES.map(([code, text]) => (
            <li key={code} className="flex w-[387px] shrink-0 items-center whitespace-nowrap">
              <PickIcon />
              <span className="w-[111px]">{code}</span>
              {text}
            </li>
          ))}
        </ul>
        <div className="mt-auto flex h-7 items-center pl-[5px] pr-[7px]">
          <Arrow dir="left" />
          <div className="ml-[9px] h-[22px] w-[73px] bg-[#dfe3e6]" />
          <div className="ml-auto"><Arrow dir="right" /></div>
        </div>
      </div>
    </section>
  )
}

function StatusBar() {
  return (
    <footer className="flex h-[43px] items-stretch gap-1 border-b-[3px] border-[#101820] pt-[2px]">
      <div className="flex w-[60px] items-center justify-center border-r-2 border-[#d4d7d4] bg-white pr-1">Bereit</div>
      <div role="progressbar" aria-valuenow={0} className="flex flex-1 items-center justify-center border-2 border-b-0 border-[#dcdfdc]">0%</div>
      <button type="button" className="ml-[2px] w-[214px] border-2 border-[#b4b6b4] bg-[#f0f3f9]">Aktuelle Fehler (50)</button>
      <div className="flex w-[164px] items-center justify-center border-2 border-b-0 border-[#dcdfdc] bg-white">Benutzer: supervisor</div>
      <div className="flex w-[138px] items-center justify-center border-2 border-b-0 border-[#dcdfdc] bg-white">Sprache: DE-CH</div>
    </footer>
  )
}

export default function App() {
  return (
    <div className="min-h-screen border-l-2 border-black bg-linear-to-br/srgb from-[#1700bd] to-white pb-[175px] pl-[365px] pr-[366px] pt-[175px] font-['Open_Sans','Noto_Sans',sans-serif] text-base">
      <div className="flex flex-col overflow-hidden rounded-[14px] bg-[#f8fcf6] text-[#2a2a2a] shadow-[0_34px_80px_0_rgba(0,0,0,0.65),2px_0_0_#111]">
        <TitleBar />
        <Ribbon />
        <div className="flex">
          <Sidebar />
          <main className="ml-[9px] flex min-w-0 flex-1 flex-col font-['Liberation_Sans',sans-serif] text-[15px]">
            <div className="flex items-end pb-[2px] pt-[3px]">
              <div className="flex h-7 w-[401px] items-center justify-end gap-4 border-r-2 border-t-2 border-r-[#1d2f45] border-t-[#4c9be0] bg-[#2a669f] pr-[10px] font-['Open_Sans',sans-serif] text-[#d8e8f6]">
                Einsatzplan - Virtualis AG - 01.09.2025 - 11.10.2025
                <button type="button" aria-label="Tab schliessen">
                  <svg viewBox="0 0 12 12" className="size-3" stroke="#fff" strokeWidth="2.600">
                    <path d="M1.500 1l9 10M10.500 1l-9 10" />
                  </svg>
                </button>
              </div>
            </div>
            <PlanTable />
            <div className="flex h-[25px] items-center border-b-2 border-[#dcdfe0] pl-[7px]">
              <Arrow dir="left" />
              <div className="ml-[10px] h-[21px] w-[427px] bg-[#dfe3e6]" />
              <div className="ml-auto pr-[7px]"><Arrow dir="right" /></div>
              <div className="h-full w-[29px] bg-[#f4f5f4]" />
            </div>
            <div className="mt-[6px] flex h-[109px] gap-[6px]">
              <DetailPanel />
              <ServicePanel />
            </div>
          </main>
        </div>
        <div className="font-['Liberation_Sans',sans-serif] text-[15px]"><StatusBar /></div>
      </div>
    </div>
  )
}
